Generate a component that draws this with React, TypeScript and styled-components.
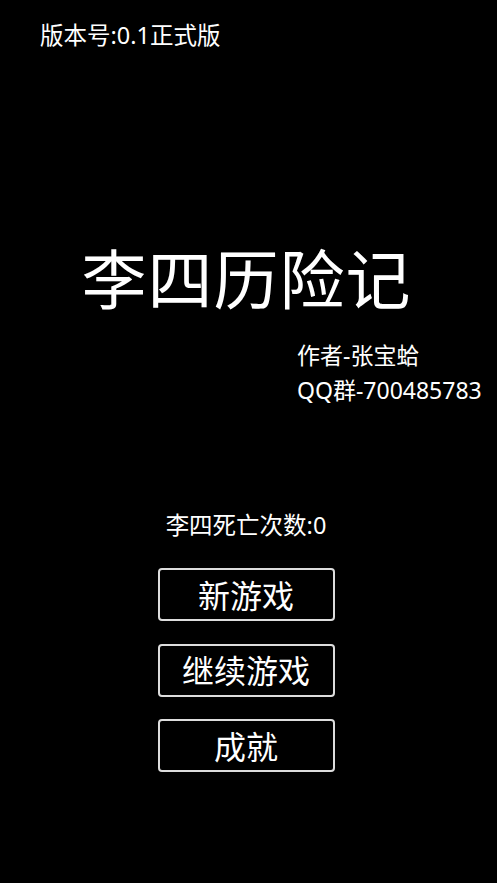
import React from "react";
import styled, { createGlobalStyle } from "styled-components";

const GlobalStyle = createGlobalStyle`
  html, body {
    margin: 0;
    padding: 0;
    background: #000;
  }
  body {
    font-family: "Noto Sans", "Noto Sans CJK SC", sans-serif;
    color: #fff;
  }
`;

const MENU = ["新游戏", "继续游戏", "成就"];

function App() {
  return (
    <>
      <GlobalStyle />
      <Screen>
        <Version>版本号:0.1正式版</Version>

        <Title>李四历险记</Title>

        <Credits>
          <CreditLine>作者-张宝蛤</CreditLine>
          <CreditLine>QQ群-700485783</CreditLine>
        </Credits>

        <DeathCount>李四死亡次数:0</DeathCount>

        <Menu>
          {MENU.map((label) => (
            <MenuButton key={label}>{label}</MenuButton>
          ))}
        </Menu>
      </Screen>
    </>
  );
}

const Screen = styled.div`
  width: 497px;
  height: 883px;
  background: #000;
  display: flex;
  flex-direction: column;
  overflow: hidden;
`;

const Version = styled.div`
  font-size: 23.5px;
  line-height: 24px;
  padding: 23px 0 0 40px;
`;

const Title = styled.h1`
  margin: 189px 0 0;
  font-family: "Noto Sans CJK SC", sans-serif;
  font-size: 65px;
  font-weight: 400;
  line-height: 80px;
  text-align: center;
  letter-spacing: 1px;
  padding-right: 4px;
`;

const Credits = styled.div`
  display: flex;
  flex-direction: column;
  gap: 7px;
  padding-left: 297px;
  margin-top: 25px;
`;

const CreditLine = styled.div`
  font-size: 23px;
  line-height: 28px;
`;

const DeathCount = styled.div`
  margin-top: 107px;
  font-size: 23.5px;
  line-height: 28px;
  text-align: center;
  padding-right: 5px;
`;

const Menu = styled.div`
  display: flex;
  flex-direction: column;
  align-items: center;
  gap: 22.5px;
  margin-top: 29px;
  padding-right: 5px;
`;

const MenuButton = styled.button`
  width: 177px;
  height: 53px;
  box-sizing: border-box;
  background: #000;
  border: 2px solid #ddd;
  border-radius: 4px;
  color: #fff;
  font-family: "Noto Sans CJK SC", sans-serif;
  font-size: 32px;
  line-height: 1;
  padding: 0 0 2px;
  cursor: pointer;
`;

export default App;
